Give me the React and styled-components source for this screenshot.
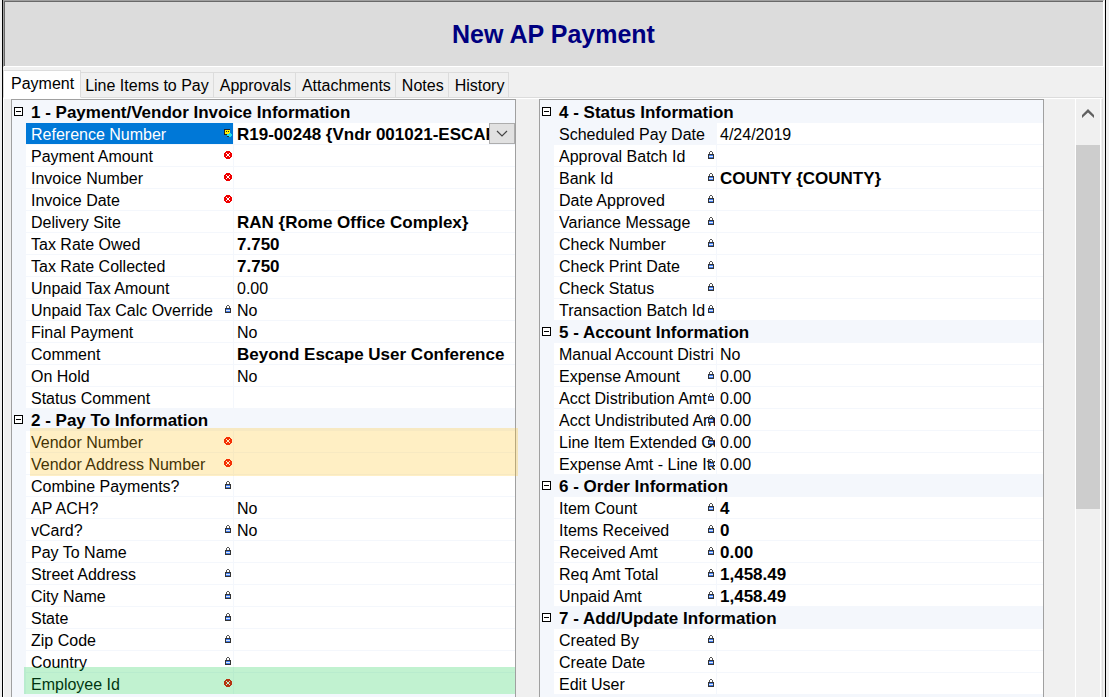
import React, { useState } from 'react'
import styled, { createGlobalStyle } from 'styled-components'

const tabs = ['Payment', 'Line Items to Pay', 'Approvals', 'Attachments', 'Notes', 'History']

const leftSections = [
  {
    title: '1 - Payment/Vendor Invoice Information',
    rows: [
      { label: 'Reference Number', icon: 'lookup', value: 'R19-00248 {Vndr 001021-ESCAPE}', bold: true, selected: true, pick: true },
      { label: 'Payment Amount', icon: 'required' },
      { label: 'Invoice Number', icon: 'required' },
      { label: 'Invoice Date', icon: 'required' },
      { label: 'Delivery Site', value: 'RAN {Rome Office Complex}', bold: true },
      { label: 'Tax Rate Owed', value: '7.750', bold: true },
      { label: 'Tax Rate Collected', value: '7.750', bold: true },
      { label: 'Unpaid Tax Amount', value: '0.00' },
      { label: 'Unpaid Tax Calc Override', icon: 'lock', value: 'No' },
      { label: 'Final Payment', value: 'No' },
      { label: 'Comment', value: 'Beyond Escape User Conference', bold: true },
      { label: 'On Hold', value: 'No' },
      { label: 'Status Comment' },
    ],
  },
  {
    title: '2 - Pay To Information',
    rows: [
      { label: 'Vendor Number', icon: 'required', marker: 'yellow' },
      { label: 'Vendor Address Number', icon: 'required' },
      { label: 'Combine Payments?', icon: 'lock' },
      { label: 'AP ACH?', value: 'No' },
      { label: 'vCard?', icon: 'lock', value: 'No' },
      { label: 'Pay To Name', icon: 'lock' },
      { label: 'Street Address', icon: 'lock' },
      { label: 'City Name', icon: 'lock' },
      { label: 'State', icon: 'lock' },
      { label: 'Zip Code', icon: 'lock' },
      { label: 'Country', icon: 'lock' },
      { label: 'Employee Id', icon: 'required', marker: 'green' },
    ],
  },
]

const rightSections = [
  {
    title: '4 - Status Information',
    rows: [
      { label: 'Scheduled Pay Date', value: '4/24/2019', current: true },
      { label: 'Approval Batch Id', icon: 'lock' },
      { label: 'Bank Id', icon: 'lock', value: 'COUNTY {COUNTY}', bold: true },
      { label: 'Date Approved', icon: 'lock' },
      { label: 'Variance Message', icon: 'lock' },
      { label: 'Check Number', icon: 'lock' },
      { label: 'Check Print Date', icon: 'lock' },
      { label: 'Check Status', icon: 'lock' },
      { label: 'Transaction Batch Id', icon: 'lock' },
    ],
  },
  {
    title: '5 - Account Information',
    rows: [
      { label: 'Manual Account Distri', value: 'No' },
      { label: 'Expense Amount', icon: 'lock', value: '0.00' },
      { label: 'Acct Distribution Amt', icon: 'lock', value: '0.00' },
      { label: 'Acct Undistributed Am', icon: 'lock', value: '0.00' },
      { label: 'Line Item Extended Co', icon: 'lock', value: '0.00' },
      { label: 'Expense Amt - Line Ite', icon: 'lock', value: '0.00' },
    ],
  },
  {
    title: '6 - Order Information',
    rows: [
      { label: 'Item Count', icon: 'lock', value: '4', bold: true },
      { label: 'Items Received', icon: 'lock', value: '0', bold: true },
      { label: 'Received Amt', icon: 'lock', value: '0.00', bold: true },
      { label: 'Req Amt Total', icon: 'lock', value: '1,458.49', bold: true },
      { label: 'Unpaid Amt', icon: 'lock', value: '1,458.49', bold: true },
    ],
  },
  {
    title: '7 - Add/Update Information',
    rows: [
      { label: 'Created By', icon: 'lock' },
      { label: 'Create Date', icon: 'lock' },
      { label: 'Edit User', icon: 'lock' },
    ],
  },
]

function StatusIcon({ kind }) {
  if (kind === 'required') {
    return (
      <IconSvg viewBox="0 0 8 8" role="img" aria-label="Required">
        <path d="M2 0h4v1h1v1h1v4h-1v1h-1v1h-4v-1h-1v-1h-1v-4h1v-1h1z" fill="#f00000" />
        <path d="M2 2h1v1h-1zM5 2h1v1h-1zM3 3h2v2h-2zM2 5h1v1h-1zM5 5h1v1h-1z" fill="#fff" />
      </IconSvg>
    )
  }
  if (kind === 'lookup') {
    return (
      <IconSvg viewBox="0 0 8 8" role="img" aria-label="Lookup">
        <rect x="0" y="0" width="6" height="6" fill="#222" />
        <rect x="1" y="1" width="5" height="4" fill="#ffee00" />
        <rect x="2" y="2" width="1" height="1" fill="#222" />
        <rect x="4" y="2" width="1" height="1" fill="#222" />
        <rect x="3" y="5" width="5" height="2" fill="#1fe0e8" />
        <rect x="5" y="4" width="2" height="4" fill="#1fe0e8" />
        <rect x="3" y="7" width="2" height="1" fill="#222" />
      </IconSvg>
    )
  }
  return (
    <IconSvg viewBox="0 0 8 8" role="img" aria-label="Locked">
      <path d="M3 0h2v1h1v2h-1v-2h-2v2h-1v-2h1z" fill="#555" />
      <rect x="1" y="3" width="6" height="5" fill="#333" />
      <rect x="2" y="4" width="4" height="3" fill="#3f7cf0" />
      <rect x="2" y="5" width="4" height="1" fill="#dce8fa" />
    </IconSvg>
  )
}

function Section({ title, rows }) {
  const [open, setOpen] = useState(true)
  return (
    <tbody>
      <tr>
        <Gutter>
          <Expander aria-label={title} aria-expanded={open} onClick={() => setOpen(!open)}>
            <svg width="9" height="9" viewBox="0 0 9 9" shapeRendering="crispEdges">
              <path d="M0.5 0.5h8v8h-8z" fill="#fff" stroke="#000" />
              <path d={open ? 'M2 4.5h5' : 'M2 4.5h5M4.5 2v5'} stroke="#000" />
            </svg>
          </Expander>
        </Gutter>
        <SectionTitle colSpan="2" scope="rowgroup">{title}</SectionTitle>
      </tr>
      {open && rows.map(row => (
        <Row key={row.label}>
          <Gutter />
          <Label scope="row" $selected={row.selected} $current={row.current}>
            <LabelText>{row.label}</LabelText>
            {row.icon && <StatusIcon kind={row.icon} />}
          </Label>
          <Value $bold={row.bold} $pick={row.pick}>
            {row.pick ? (
              <Picker>
                <select aria-label={row.label}>
                  <option>{row.value}</option>
                </select>
                <PickerArrow>
                  <svg width="12" height="7" viewBox="0 0 12 7">
                    <path d="M1 1l5 5 5-5" fill="none" stroke="#444" strokeWidth="1.2" />
                  </svg>
                </PickerArrow>
              </Picker>
            ) : row.value}
            {row.marker && <Marker $kind={row.marker} />}
          </Value>
        </Row>
      ))}
    </tbody>
  )
}

function PropertyGrid({ sections, labelWidth }) {
  return (
    <GridFrame>
      <Grid>
        <colgroup>
          <Col $width={14} />
          <Col $width={labelWidth} />
          <col />
        </colgroup>
        {sections.map(section => (
          <Section key={section.title} title={section.title} rows={section.rows} />
        ))}
      </Grid>
    </GridFrame>
  )
}

function App() {
  const [active, setActive] = useState('Payment')
  return (
    <>
      <GlobalStyle />
      <Window>
        <Header>
          <h1>New AP Payment</h1>
        </Header>
        <TabBar role="tablist">
          {tabs.map(tab => (
            <Tab key={tab} role="tab" aria-selected={tab === active} $active={tab === active} onClick={() => setActive(tab)}>
              {tab}
            </Tab>
          ))}
        </TabBar>
        <TabPage role="tabpanel" aria-label={active}>
          <PropertyGrid sections={leftSections} labelWidth={208} />
          <PropertyGrid sections={rightSections} labelWidth={163} />
          <ScrollBar>
            <ScrollButton aria-label="Scroll up">
              <svg width="12" height="9" viewBox="0 0 12 9">
                <path d="M0 9V6l6-6 6 6v3L6 3.500z" fill="#606060" />
              </svg>
            </ScrollButton>
            <Thumb />
          </ScrollBar>
        </TabPage>
      </Window>
    </>
  )
}

export default App

const GlobalStyle = createGlobalStyle`
  * {
    box-sizing: border-box;
  }

  body {
    margin: 0;
    overflow: hidden;
    background: #f0f0f0;
    color: #000;
    font-family: "Liberation Sans", Arial, sans-serif;
    font-size: 16px;
  }

  button, select {
    font: inherit;
    color: inherit;
  }
`

const Window = styled.div`
  height: 100vh;
  margin: 0 3px 0 2px;
  display: flex;
  flex-direction: column;
  border: solid #000;
  border-width: 0 1px;
  background: #f0f0f0;
`

const Header = styled.header`
  height: 67px;
  flex: none;
  margin-right: 1px;
  display: flex;
  align-items: center;
  justify-content: center;
  background: #dcdcdc;
  border: 1px solid #a0a0a0;
  border-bottom-color: #fff;
  border-right-color: #fff;
  box-shadow: inset 1px 1px #696969;

  h1 {
    margin: 0;
    color: #000080;
    font-size: 25px;
    line-height: 28px;
  }
`

const TabBar = styled.div`
  height: 31px;
  flex: none;
  display: flex;
  align-items: flex-end;
  margin-right: 2px;
  border-bottom: 1px solid #dcdcdc;
`

const Tab = styled.button`
  position: relative;
  z-index: ${props => props.$active ? 1 : 0};
  height: ${props => props.$active ? '28px' : '26px'};
  margin: ${props => props.$active ? '0 -2px -1px 0' : '0 0 -1px'};
  padding: ${props => props.$active ? '0 6px 0 7px' : '2px 4px 0 6px'};
  border: 1px solid #dcdcdc;
  border-left-width: ${props => props.$active ? '1px' : '0'};
  border-bottom-color: ${props => props.$active ? '#fff' : '#dcdcdc'};
  background: ${props => props.$active ? '#fff' : '#f0f0f0'};
  line-height: 22px;
  white-space: nowrap;
`

const TabPage = styled.div`
  flex: 1;
  min-height: 0;
  display: flex;
  gap: 23px;
  margin-right: 2px;
  padding: 0 1px 0 7px;
  border-top: 1px solid #fff;
  border-left: 1px solid #fff;
  border-right: 1px solid #dcdcdc;
  overflow: hidden;
`

const GridFrame = styled.div`
  flex: 1;
  min-width: 0;
  padding-top: 1px;
  border: solid #a0a0a0;
  border-width: 1px 1px 0;
  background: #f4f7fc;
`

const Grid = styled.table`
  width: 100%;
  table-layout: fixed;
  border-collapse: separate;
  border-spacing: 0;

  td, th {
    height: 22px;
    padding: 0;
    line-height: 19px;
    text-align: left;
    white-space: nowrap;
  }
`

const Col = styled.col`
  width: ${props => props.$width}px;
`

const Row = styled.tr`
  position: relative;
`

const Gutter = styled.td`
  background: #f4f7fc;
`

const Expander = styled.button`
  display: flex;
  margin: 0 0 1px 2px;
  padding: 0;
  border: 0;
  background: none;
`

const SectionTitle = styled.th`
  && {
    padding-left: 5px;
    line-height: 21px;
  }
  background: #f4f7fc;
  font-size: 17px;
`

const Label = styled.th`
  && {
    padding: 2px 0 0 5px;
  }
  position: relative;
  font-weight: normal;
  color: ${props => props.$selected ? '#fff' : '#000'};
  background: ${props => props.$selected ? '#0078d7' : props.$current ? '#f4f7fc' : '#fff'};
  border-right: 1px solid #f4f7fc;
  border-bottom: 1px solid #f4f7fc;
`

const LabelText = styled.span`
  display: block;
  margin-right: 1px;
  overflow: hidden;
`

const IconSvg = styled.svg`
  position: absolute;
  top: 6px;
  right: 1px;
  width: 8px;
  height: 8px;
  shape-rendering: crispEdges;
`

const Value = styled.td`
  && {
    padding: ${props => props.$pick ? '0 0 0 3px' : '2px 0 0 3px'};
  }
  background: #fff;
  border-bottom: 1px solid #f4f7fc;
  font-size: ${props => props.$bold ? '17px' : '16px'};
  font-weight: ${props => props.$bold ? 'bold' : 'normal'};
`

const Picker = styled.div`
  display: flex;
  position: relative;

  select {
    flex: 1;
    min-width: 0;
    height: 21px;
    padding: 2px 26px 0 0;
    border: 0;
    appearance: none;
    background: #fff;
    line-height: 19px;
  }
`

const PickerArrow = styled.span`
  position: absolute;
  top: 0;
  right: 0;
  width: 26px;
  height: 21px;
  display: flex;
  align-items: center;
  justify-content: center;
  border: 1px solid #adadad;
  background: #e1e1e1;
  pointer-events: none;
`

const Marker = styled.span`
  position: absolute;
  z-index: 1;
  pointer-events: none;
  top: ${props => props.$kind === 'yellow' ? '-3px' : '-6px'};
  left: ${props => props.$kind === 'yellow' ? '18px' : '12px'};
  right: ${props => props.$kind === 'yellow' ? '-3px' : '0'};
  height: ${props => props.$kind === 'yellow' ? '48px' : '27px'};
  background: ${props => props.$kind === 'yellow' ? 'rgba(255, 191, 19, 0.25)' : 'rgba(7, 203, 67, 0.25)'};
`

const ScrollBar = styled.div`
  flex: none;
  width: 26px;
  margin: 0 0 0 8px;
  border: solid #fff;
  border-width: 0 1px;
`

const ScrollButton = styled.button`
  width: 100%;
  height: 46px;
  display: flex;
  justify-content: center;
  padding: 10px 0 0;
  border: 0;
  background: #f0f0f0;
`

const Thumb = styled.div`
  height: 364px;
  background: #cdcdcd;
`
